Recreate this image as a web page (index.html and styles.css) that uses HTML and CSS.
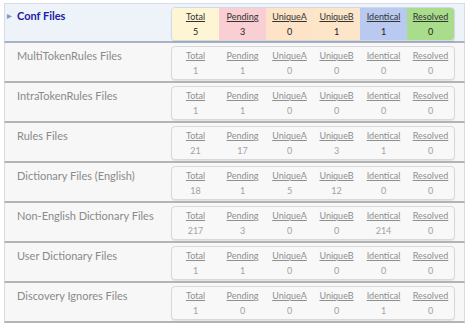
FILE: index.html
```html
<!DOCTYPE html>
<html>
<head>
<meta charset="utf-8">
<link rel="stylesheet" href="styles.css">
</head>
<body>
<div class="list">
  <div class="row active">
    <div class="title"><span class="arrow">&#9654;</span>Conf Files</div>
    <div class="stats">
      <div class="cell c-total"><a>Total</a><span>5</span></div>
      <div class="cell c-pending"><a>Pending</a><span>3</span></div>
      <div class="cell c-ua"><a>UniqueA</a><span>0</span></div>
      <div class="cell c-ub"><a>UniqueB</a><span>1</span></div>
      <div class="cell c-ident"><a>Identical</a><span>1</span></div>
      <div class="cell c-res"><a>Resolved</a><span>0</span></div>
    </div>
  </div>
  <div class="row">
    <div class="title">MultiTokenRules Files</div>
    <div class="stats">
      <div class="cell"><a>Total</a><span>1</span></div>
      <div class="cell"><a>Pending</a><span>1</span></div>
      <div class="cell"><a>UniqueA</a><span>0</span></div>
      <div class="cell"><a>UniqueB</a><span>0</span></div>
      <div class="cell"><a>Identical</a><span>0</span></div>
      <div class="cell"><a>Resolved</a><span>0</span></div>
    </div>
  </div>
  <div class="row">
    <div class="title">IntraTokenRules Files</div>
    <div class="stats">
      <div class="cell"><a>Total</a><span>1</span></div>
      <div class="cell"><a>Pending</a><span>1</span></div>
      <div class="cell"><a>UniqueA</a><span>0</span></div>
      <div class="cell"><a>UniqueB</a><span>0</span></div>
      <div class="cell"><a>Identical</a><span>0</span></div>
      <div class="cell"><a>Resolved</a><span>0</span></div>
    </div>
  </div>
  <div class="row">
    <div class="title">Rules Files</div>
    <div class="stats">
      <div class="cell"><a>Total</a><span>21</span></div>
      <div class="cell"><a>Pending</a><span>17</span></div>
      <div class="cell"><a>UniqueA</a><span>0</span></div>
      <div class="cell"><a>UniqueB</a><span>3</span></div>
      <div class="cell"><a>Identical</a><span>1</span></div>
      <div class="cell"><a>Resolved</a><span>0</span></div>
    </div>
  </div>
  <div class="row">
    <div class="title">Dictionary Files (English)</div>
    <div class="stats">
      <div class="cell"><a>Total</a><span>18</span></div>
      <div class="cell"><a>Pending</a><span>1</span></div>
      <div class="cell"><a>UniqueA</a><span>5</span></div>
      <div class="cell"><a>UniqueB</a><span>12</span></div>
      <div class="cell"><a>Identical</a><span>0</span></div>
      <div class="cell"><a>Resolved</a><span>0</span></div>
    </div>
  </div>
  <div class="row">
    <div class="title">Non-English Dictionary Files</div>
    <div class="stats">
      <div class="cell"><a>Total</a><span>217</span></div>
      <div class="cell"><a>Pending</a><span>3</span></div>
      <div class="cell"><a>UniqueA</a><span>0</span></div>
      <div class="cell"><a>UniqueB</a><span>0</span></div>
      <div class="cell"><a>Identical</a><span>214</span></div>
      <div class="cell"><a>Resolved</a><span>0</span></div>
    </div>
  </div>
  <div class="row">
    <div class="title">User Dictionary Files</div>
    <div class="stats">
      <div class="cell"><a>Total</a><span>1</span></div>
      <div class="cell"><a>Pending</a><span>1</span></div>
      <div class="cell"><a>UniqueA</a><span>0</span></div>
      <div class="cell"><a>UniqueB</a><span>0</span></div>
      <div class="cell"><a>Identical</a><span>0</span></div>
      <div class="cell"><a>Resolved</a><span>0</span></div>
    </div>
  </div>
  <div class="row">
    <div class="title">Discovery Ignores Files</div>
    <div class="stats">
      <div class="cell"><a>Total</a><span>1</span></div>
      <div class="cell"><a>Pending</a><span>0</span></div>
      <div class="cell"><a>UniqueA</a><span>0</span></div>
      <div class="cell"><a>UniqueB</a><span>0</span></div>
      <div class="cell"><a>Identical</a><span>1</span></div>
      <div class="cell"><a>Resolved</a><span>0</span></div>
    </div>
  </div>
</div>
</body>
</html>
```
FILE: styles.css
```css
html, body {
  margin: 0;
  padding: 0;
  background: #ffffff;
}
body {
  padding: 3px 3px 0 4px;
  font-family: Lato, "Open Sans", sans-serif;
}
.list {
  width: 461px;
  display: flex;
  flex-direction: column;
}
.row {
  box-sizing: border-box;
  height: 40px;
  display: flex;
  justify-content: space-between;
  align-items: flex-start;
  background: #f7f7f7;
  border: 1px solid #dcdcdc;
  border-bottom: 2px solid #b4b4b4;
  border-top: none;
  padding: 3px 9px 0 12px;
}
.row.active {
  background: #eef3fa;
  border-top: 1px solid #dde3ec;
  border-color: #d6dde8;
  border-bottom-color: #a9b3c2;
  padding-top: 3px;
}
.title {
  font-size: 11px;
  color: #8a8a8a;
  padding-top: 3px;
  position: relative;
}
.active .title {
  color: #2020a8;
  font-weight: bold;
  padding-top: 2px;
}
.arrow {
  position: absolute;
  left: -10px;
  top: 5px;
  font-size: 6px;
  color: #7d9cc6;
}
.stats {
  display: flex;
  border: 1px solid #d8d8d8;
  border-radius: 4px;
  background: #f8f8f8;
  box-shadow: 0 1px 1px rgba(0,0,0,0.08);
  overflow: hidden;
}
.active .stats {
  border-color: #d2dae6;
}
.cell {
  width: 47px;
  height: 32px;
  display: flex;
  flex-direction: column;
  align-items: center;
  font-size: 9px;
  color: #a2a2a2;
}
.cell a {
  text-decoration: underline;
  margin-top: 3px;
  line-height: 12px;
  color: #8f8f8f;
}
.cell span {
  line-height: 12px;
  margin-top: 3px;
}
.active .cell { color: #222; }
.active .cell a { color: #333; }
.c-total { background: #fdf5d4; }
.c-pending { background: #f9cfd3; }
.c-ua { background: #fde3c7; }
.c-ub { background: #fde5c9; }
.c-ident { background: #b9c9f0; }
.c-res { background: #a9dc8b; }
```
